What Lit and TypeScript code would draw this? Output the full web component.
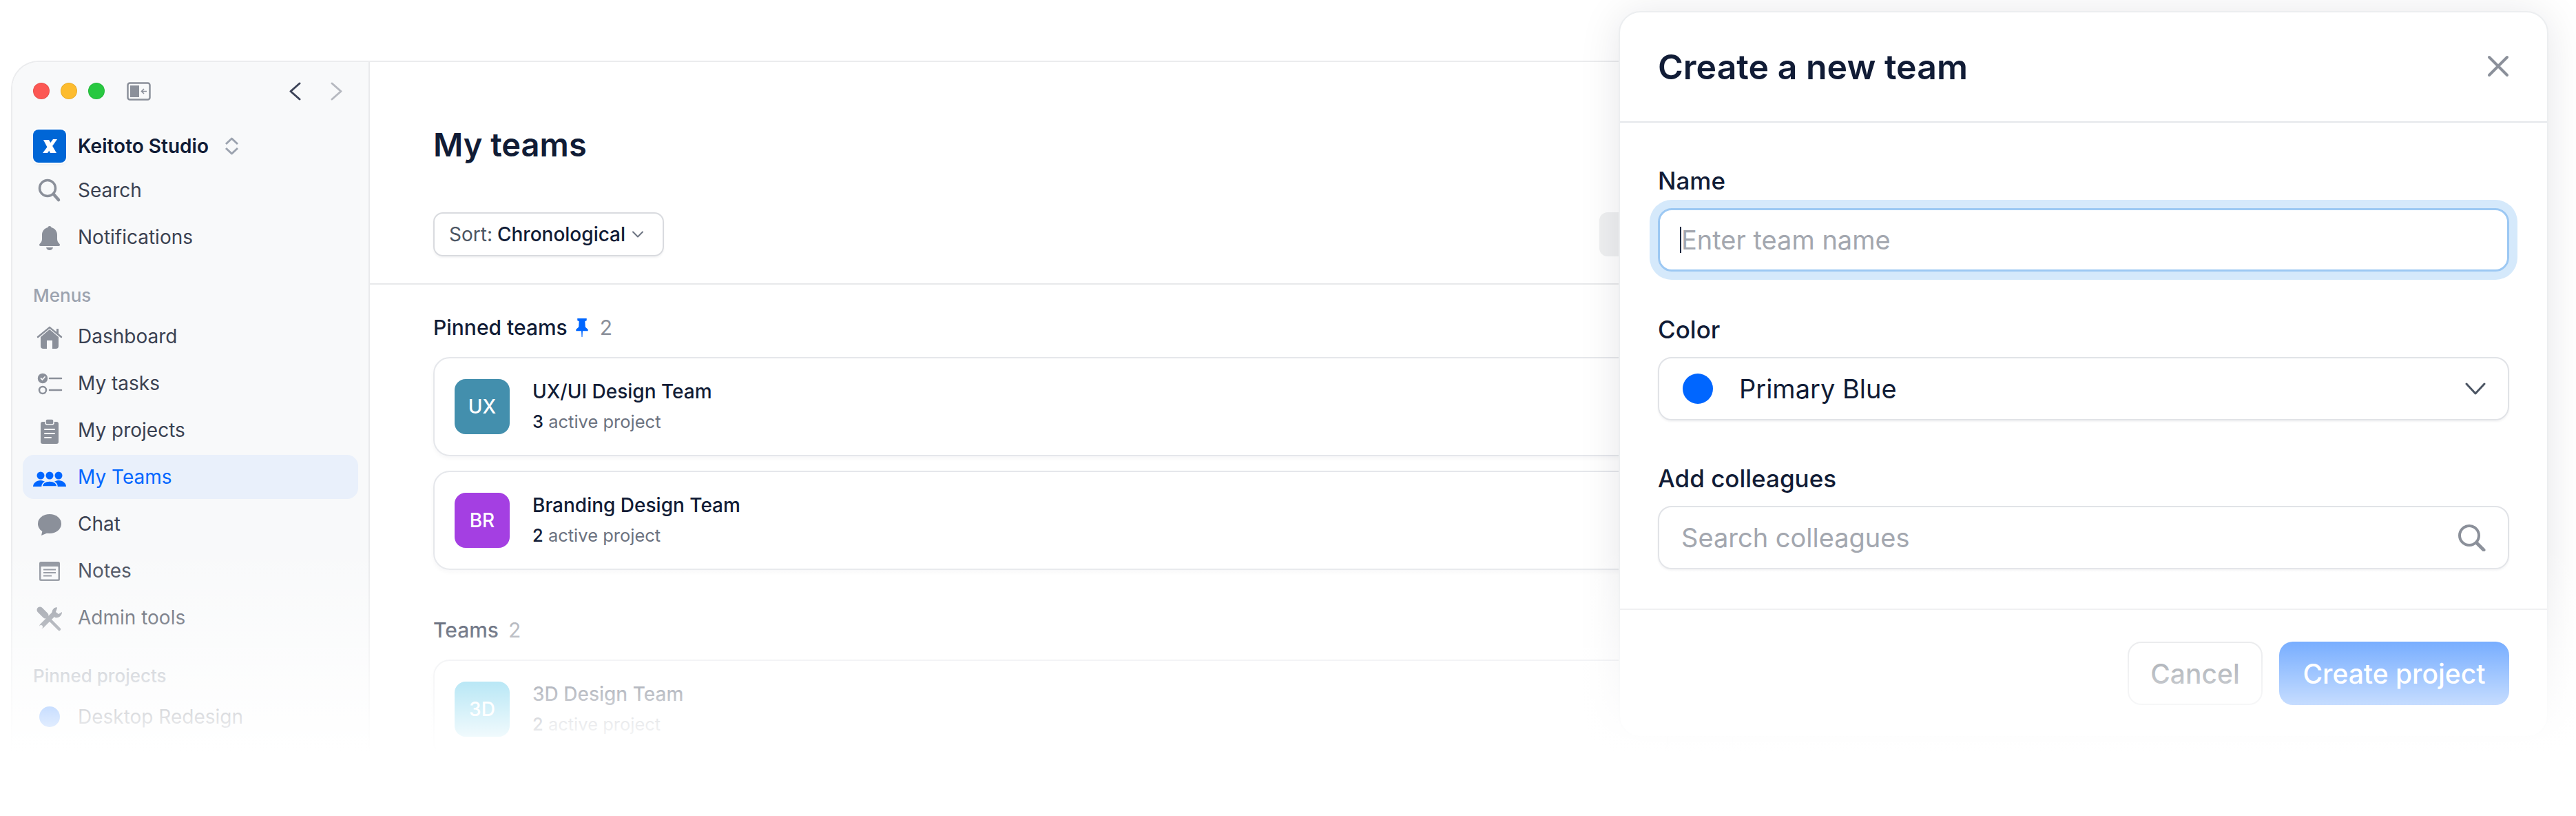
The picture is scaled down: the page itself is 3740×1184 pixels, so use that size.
import { css, html, LitElement } from "lit";
import { customElement } from "lit/decorators.js";

const ICON = "#8b909a";

const icons = {
  search: html`<svg viewBox="0 0 48 48" fill="none" stroke=${ICON} stroke-width="3.5" stroke-linecap="round"><circle cx="21" cy="21" r="11.5"/><path d="M30 30l7 8" stroke-width="4.5"/></svg>`,
  bell: html`<svg viewBox="0 0 48 48" fill=${ICON}><path d="M24 8c-1.5 0-2.6 1-2.8 2.300C15.800 11.500 13 16 13 21v6c0 3-1.500 5-3.500 7-1 1-.5 3 1.500 3h26c2 0 2.500-2 1.500-3-2-2-3.500-4-3.500-7v-6c0-5-2.800-9.500-8.200-10.700C26.600 9 25.500 8 24 8z"/><path d="M19 39h10c-.5 2.500-2.500 4-5 4s-4.500-1.500-5-4z"/></svg>`,
  home: html`<svg viewBox="0 0 48 48" fill=${ICON}><path d="M11 25L24 14l13 11v13a4 4 0 0 1-4 4H15a4 4 0 0 1-4-4z"/><path d="M7 25L24 11l17 14" fill="none" stroke=${ICON} stroke-width="2.500" stroke-linecap="round"/><rect x="34" y="13" width="3" height="8"/><rect x="20" y="30" width="8" height="12" fill="#f8f9fa"/></svg>`,
  tasks: html`<svg viewBox="0 0 48 48" fill="none" stroke=${ICON} stroke-width="2.500" stroke-linecap="round"><circle cx="14" cy="17" r="6" fill=${ICON}/><path d="M11.500 17l2 2 3.500-4" stroke="#f8f9fa" stroke-width="1.800"/><circle cx="14" cy="34" r="5"/><path d="M24 17h17M24 34h17"/></svg>`,
  clipboard: html`<svg viewBox="0 0 48 48" fill=${ICON}><rect x="11" y="12" width="26" height="32" rx="3"/><rect x="18" y="8" width="12" height="8" rx="2.500" stroke="#f8f9fa" stroke-width="1.500"/><path d="M17 23h14M17 29h14M17 35h9" stroke="#f8f9fa" stroke-width="2" stroke-linecap="round"/></svg>`,
  teams: html`<svg viewBox="0 0 48 48" fill="#0066ff" stroke="#e9f0fb" stroke-width="1.500"><circle cx="11" cy="22" r="5.500" stroke="none"/><circle cx="37" cy="22" r="5.500" stroke="none"/><circle cx="24" cy="22" r="5.500" stroke="none"/><path d="M0 38c0-5 5-9 11-9 5 0 10 4 11 9z" stroke="none"/><path d="M26 38c1-5 6-9 11-9 6 0 11 4 11 9z" stroke="none"/><path d="M13 38c0-5 5-8 11-8s11 3 11 8z"/></svg>`,
  chat: html`<svg viewBox="0 0 48 48" fill=${ICON}><ellipse cx="24" cy="24" rx="17" ry="14"/><path d="M14 32l-2 9 12-5z"/></svg>`,
  notes: html`<svg viewBox="0 0 48 48"><rect x="9" y="11" width="30" height="28" rx="2.500" fill=${ICON}/><rect x="11.500" y="18" width="25" height="18.500" rx="1" fill="#f8f9fa"/><path d="M15 22.500h18M15 27h18M15 31.500h12" stroke=${ICON} stroke-width="1.800"/></svg>`,
  tools: html`<svg viewBox="0 0 48 48" fill="none" stroke=${ICON} stroke-linecap="round"><path d="M10 13l8 8" stroke-width="9"/><path d="M20 23l18 18" stroke-width="4.500"/><path d="M30 19L13 36" stroke-width="7"/><circle cx="11.500" cy="37.500" r="2.500" fill="#f8f9fa" stroke="none"/><path d="M34 9a8 8 0 0 0-6 11l4 4a8 8 0 0 0 10-8l-5 3-4-3 2-6" fill=${ICON} stroke="none"/></svg>`,
};

const navTop = [
  { label: "Search", icon: icons.search },
  { label: "Notifications", icon: icons.bell },
];

const menus = [
  { label: "Dashboard", icon: icons.home },
  { label: "My tasks", icon: icons.tasks },
  { label: "My projects", icon: icons.clipboard },
  { label: "My Teams", icon: icons.teams, active: true },
  { label: "Chat", icon: icons.chat },
  { label: "Notes", icon: icons.notes },
  { label: "Admin tools", icon: icons.tools },
];

const pinnedTeams = [
  { code: "UX", name: "UX/UI Design Team", count: 3, color: "#438fad" },
  { code: "BR", name: "Branding Design Team", count: 2, color: "#a43fe2" },
];

@customElement("app-root")
export class AppRoot extends LitElement {
  private navRow(item: { label: string; icon: unknown; active?: boolean }) {
    return html`
      <div class="nav-row ${item.active ? "active" : ""}">
        <span class="nav-icon">${item.icon}</span>
        <span>${item.label}</span>
      </div>
    `;
  }

  private teamCard(team: { code: string; name: string; count: number; color: string }) {
    return html`
      <div class="card">
        <div class="avatar" style="background:${team.color}">${team.code}</div>
        <div class="card-text">
          <div class="card-name">${team.name}</div>
          <div class="card-sub"><b>${team.count}</b> active project</div>
        </div>
      </div>
    `;
  }

  render() {
    return html`
      <div class="window">
        <aside class="sidebar">
          <div class="titlebar">
            <span class="dot" style="background:#fc5753"></span>
            <span class="dot" style="background:#fdbc2e"></span>
            <span class="dot" style="background:#28c840"></span>
            <svg class="toggle" viewBox="0 0 35 27" fill="none">
              <rect x="1.500" y="1.500" width="32" height="24" rx="3" stroke=${ICON} stroke-width="2.500"/>
              <rect x="5" y="5" width="13" height="17" fill=${ICON}/>
              <path d="M29 13.500h-7M25 10l-3.500 3.500L25 17" stroke=${ICON} stroke-width="1.600"/>
            </svg>
            <span class="arrows">
              <svg viewBox="0 0 17 27" fill="none" stroke="#3c4358" stroke-width="3" stroke-linecap="round" stroke-linejoin="round"><path d="M15 2L2 13.500 15 25"/></svg>
              <svg viewBox="0 0 17 27" fill="none" stroke="#b6b9c0" stroke-width="3" stroke-linecap="round" stroke-linejoin="round"><path d="M2 2l13 11.500L2 25"/></svg>
            </span>
          </div>

          <div class="org">
            <span class="logo">
              <svg viewBox="0 0 48 48" fill="#fff">
                <path d="M15 15h8l11 19h-9z"/>
                <path d="M35 14h-6L14 34h7z"/>
              </svg>
            </span>
            <span class="org-name">Keitoto Studio</span>
            <svg class="updown" viewBox="0 0 21 26" fill="none" stroke="#9ca3af" stroke-width="3" stroke-linejoin="round"><path d="M2 10l8.500-8L19 10M2 16l8.500 8 8.500-8"/></svg>
          </div>

          <div class="nav-list">${navTop.map((i) => this.navRow(i))}</div>

          <div class="side-label">Menus</div>
          <div class="nav-list">${menus.map((i) => this.navRow(i))}</div>

          <div class="side-label">Pinned projects</div>
          <div class="nav-row">
            <span class="nav-icon"><span class="project-dot"></span></span>
            <span>Desktop Redesign</span>
          </div>
        </aside>

        <main class="main">
          <h1>My teams</h1>
          <div class="toolbar">
            <div class="sort">
              <span class="sort-key">Sort:</span>
              <span class="sort-value">Chronological</span>
              <svg viewBox="0 0 18 10" fill="none" stroke="#6b7280" stroke-width="2" stroke-linecap="round" stroke-linejoin="round"><path d="M2 1.500l7 7 7-7"/></svg>
            </div>
            <div class="ghost-btn"></div>
          </div>
          <div class="list">
            <div class="list-head">
              <span>Pinned teams</span>
              <svg class="pin" viewBox="0 0 20 28" fill="#0066ff"><path d="M3 0h14v3l-2.500 1.500L15 13l4 3.500V19h-8l-.5 9h-1L9 19H1v-2.500L5 13l.5-8.500L3 3z"/></svg>
              <span class="count">2</span>
            </div>
            <div class="cards">${pinnedTeams.map((t) => this.teamCard(t))}</div>

            <div class="list-head second">
              <span>Teams</span>
              <span class="count">2</span>
            </div>
            <div class="cards">
              ${this.teamCard({ code: "3D", name: "3D Design Team", count: 2, color: "#2fb9e3" })}
            </div>
          </div>
        </main>
      </div>

      <section class="modal">
        <header class="modal-head">
          <h2>Create a new team</h2>
          <svg viewBox="0 0 32 32" fill="none" stroke=${ICON} stroke-width="4" stroke-linecap="round"><path d="M3 3l26 26M29 3L3 29"/></svg>
        </header>
        <div class="modal-body">
          <label>Name</label>
          <div class="input focused"><span class="caret"></span><span class="placeholder">Enter team name</span></div>
          <label class="next">Color</label>
          <div class="input">
            <span class="swatch"></span>
            <span class="value">Primary Blue</span>
            <svg class="end chev" viewBox="0 0 30 18" fill="none" stroke="#4b5563" stroke-width="3" stroke-linecap="round" stroke-linejoin="round"><path d="M2 2l13 14L28 2"/></svg>
          </div>
          <label class="next">Add colleagues</label>
          <div class="input">
            <span class="placeholder">Search colleagues</span>
            <svg class="end find" viewBox="0 0 41 40" fill="none" stroke=${ICON} stroke-width="4" stroke-linecap="round"><circle cx="17" cy="17" r="14"/><path d="M28 28l10 10" stroke-width="5"/></svg>
          </div>
        </div>
        <footer class="modal-foot">
          <button class="cancel">Cancel</button>
          <button class="primary">Create project</button>
        </footer>
      </section>

      <div class="fade"></div>
    `;
  }

  static styles = css`
    :host {
      display: block;
      position: relative;
      height: 1184px;
      overflow: hidden;
      background: #fff;
      font-family: Inter, "Liberation Sans", sans-serif;
      color: #111c36;
    }

    h1,
    h2 {
      margin: 0;
      font-weight: 600;
    }

    .window {
      display: flex;
      box-sizing: border-box;
      width: 2500px;
      height: 1002px;
      margin: 88px 0 0 16px;
      border: 2px solid #ebecee;
      border-bottom: none;
      border-radius: 40px 0 0 0;
      overflow: hidden;
    }

    /* sidebar */
    .sidebar {
      box-sizing: border-box;
      flex: 0 0 519px;
      padding: 28px 15px 0;
      background: #f8f9fa;
      border-right: 2px solid #e9eaec;
    }

    .titlebar {
      display: flex;
      align-items: center;
      height: 28px;
      padding-left: 15px;
      gap: 16px;
    }

    .dot {
      width: 24px;
      height: 24px;
      border-radius: 50%;
      box-sizing: border-box;
      border: 1px solid rgba(0, 0, 0, 0.08);
    }

    .toggle {
      width: 35px;
      height: 27px;
      margin-left: 16px;
    }

    .arrows {
      display: flex;
      gap: 43px;
      margin-left: 185px;
    }

    .arrows svg {
      width: 17px;
      height: 27px;
    }

    .org {
      display: flex;
      align-items: center;
      margin: 42px 0 8px 15px;
    }

    .logo {
      width: 48px;
      height: 48px;
      border-radius: 8px;
      background: #0066d6;
      box-shadow: 0 0 0 2px #fff, 0 2px 4px rgba(0, 0, 0, 0.08);
    }

    .logo svg {
      display: block;
    }

    .org-name {
      margin-left: 17px;
      font-size: 28px;
      font-weight: 600;
      white-space: nowrap;
    }

    .updown {
      width: 21px;
      height: 26px;
      margin-left: 23px;
    }

    .nav-list {
      display: flex;
      flex-direction: column;
      gap: 4px;
    }

    .nav-row {
      display: flex;
      align-items: center;
      height: 64px;
      padding-left: 15px;
      border-radius: 16px;
      font-size: 28px;
      color: #3b4252;
    }

    .nav-row.active {
      background: #e9f0fb;
      color: #0066ff;
    }

    .nav-icon {
      display: flex;
      align-items: center;
      justify-content: center;
      width: 48px;
      height: 48px;
      margin-right: 17px;
    }

    .nav-icon svg {
      width: 48px;
      height: 48px;
    }

    .project-dot {
      width: 30px;
      height: 30px;
      border-radius: 50%;
      background: #0066ff;
    }

    .side-label {
      height: 32px;
      margin: 37px 0 11px 15px;
      font-size: 26px;
      line-height: 32px;
      font-weight: 500;
      color: #9ca3af;
    }

    /* main column */
    .main {
      flex: 1;
      min-width: 0;
      background: #fff;
    }

    h1 {
      height: 56px;
      margin: 92px 0 0 92px;
      font-size: 47px;
      line-height: 56px;
    }

    .toolbar {
      display: flex;
      justify-content: space-between;
      height: 64px;
      margin-top: 70px;
      padding: 0 92px 39px;
      border-bottom: 2px solid #e8e9eb;
    }

    .sort {
      display: flex;
      align-items: center;
      gap: 7px;
      box-sizing: border-box;
      width: 335px;
      padding-left: 21px;
      border: 2px solid #d9dbdf;
      border-radius: 14px;
      box-shadow: 0 2px 3px rgba(16, 24, 40, 0.05);
      font-size: 28px;
      white-space: nowrap;
    }

    .sort-key {
      color: #4b5563;
    }

    .sort-value {
      font-weight: 500;
    }

    .sort svg {
      width: 18px;
      height: 10px;
      margin-left: 2px;
    }

    .ghost-btn {
      width: 100px;
      border-radius: 12px;
      background: #eff0f1;
    }

    .list {
      padding: 44px 92px 0;
    }

    .list-head {
      display: flex;
      align-items: center;
      height: 36px;
      margin-bottom: 25px;
      font-size: 30px;
      font-weight: 500;
      white-space: nowrap;
    }

    .list-head.second {
      margin-top: 69px;
    }

    .pin {
      width: 20px;
      height: 27px;
      margin: 0 16px 0 11px;
    }

    .count {
      font-weight: 400;
      color: #8b909a;
    }

    .second .count {
      margin-left: 14px;
    }

    .cards {
      display: flex;
      flex-direction: column;
      gap: 21px;
    }

    .card {
      display: flex;
      align-items: center;
      box-sizing: border-box;
      height: 144px;
      padding-left: 29px;
      border: 2px solid #e5e7eb;
      border-radius: 24px;
      box-shadow: 0 3px 6px rgba(16, 24, 40, 0.04);
      flex-shrink: 0;
    }

    .avatar {
      display: flex;
      align-items: center;
      justify-content: center;
      width: 80px;
      height: 80px;
      margin-right: 33px;
      border-radius: 16px;
      font-size: 28px;
      font-weight: 500;
      color: #fff;
    }

    .card-text {
      display: flex;
      flex-direction: column;
      gap: 12px;
    }

    .card-name {
      font-size: 28px;
      line-height: 32px;
      font-weight: 500;
    }

    .card-sub {
      font-size: 25.500px;
      line-height: 32px;
      color: #6b7280;
    }

    .card-sub b {
      font-weight: 500;
      color: #111c36;
    }

    /* modal, sits on top of the window */
    .modal {
      position: absolute;
      top: 16px;
      left: 2350px;
      box-sizing: border-box;
      width: 1350px;
      height: 1054px;
      border: 2px solid #eceef0;
      border-radius: 32px;
      background: #fff;
      box-shadow: 0 4px 60px rgba(16, 24, 40, 0.1);
    }

    .modal-head {
      display: flex;
      align-items: center;
      justify-content: space-between;
      box-sizing: border-box;
      height: 160px;
      padding: 0 55px;
      border-bottom: 2px solid #e5e7eb;
    }

    .modal-head svg {
      width: 32px;
      height: 32px;
      margin-top: -2px;
    }

    h2 {
      font-size: 50px;
    }

    .modal-body {
      display: flex;
      flex-direction: column;
      padding: 64px 55px 57px;
      border-bottom: 2px solid #e9eaec;
    }

    label {
      height: 40px;
      margin-bottom: 20px;
      font-size: 35px;
      line-height: 40px;
      font-weight: 500;
    }

    label.next {
      margin-top: 64px;
    }

    .input {
      display: flex;
      align-items: center;
      box-sizing: border-box;
      height: 92px;
      padding: 0 32px;
      border: 2px solid #e1e3e7;
      border-radius: 20px;
      box-shadow: 0 2px 3px rgba(16, 24, 40, 0.05);
      font-size: 38px;
    }

    .input.focused {
      border: 3px solid #9cc8f3;
      padding-left: 29px;
      box-shadow: 0 0 0 12px #d5e9fb;
    }

    .caret {
      width: 2px;
      height: 38px;
      background: #1d2940;
    }

    .placeholder {
      color: #a3a7af;
    }

    .swatch {
      width: 44px;
      height: 44px;
      margin: 0 38px 0 2px;
      border-radius: 50%;
      background: #0066ff;
    }

    .end {
      margin-left: auto;
    }

    .chev {
      width: 30px;
      height: 18px;
    }

    .find {
      width: 41px;
      height: 40px;
    }

    .modal-foot {
      display: flex;
      justify-content: flex-end;
      gap: 24px;
      padding: 46px 55px 0;
    }

    button {
      height: 92px;
      padding: 0;
      border-radius: 20px;
      font: 500 39px Inter, "Liberation Sans", sans-serif;
    }

    .cancel {
      width: 196px;
      background: #fff;
      color: #4b5563;
      border: 2px solid #d9dbdf;
    }

    .primary {
      width: 334px;
      background: #0066ff;
      color: #fff;
      border: none;
    }

    /* white wash that dissolves the bottom of the whole picture */
    .fade {
      position: absolute;
      inset: 0;
      pointer-events: none;
      background: linear-gradient(rgba(255, 255, 255, 0) 790px, #fff 1090px);
    }
  `;
}

declare global {
  interface HTMLElementTagNameMap {
    "app-root": AppRoot;
  }
}
